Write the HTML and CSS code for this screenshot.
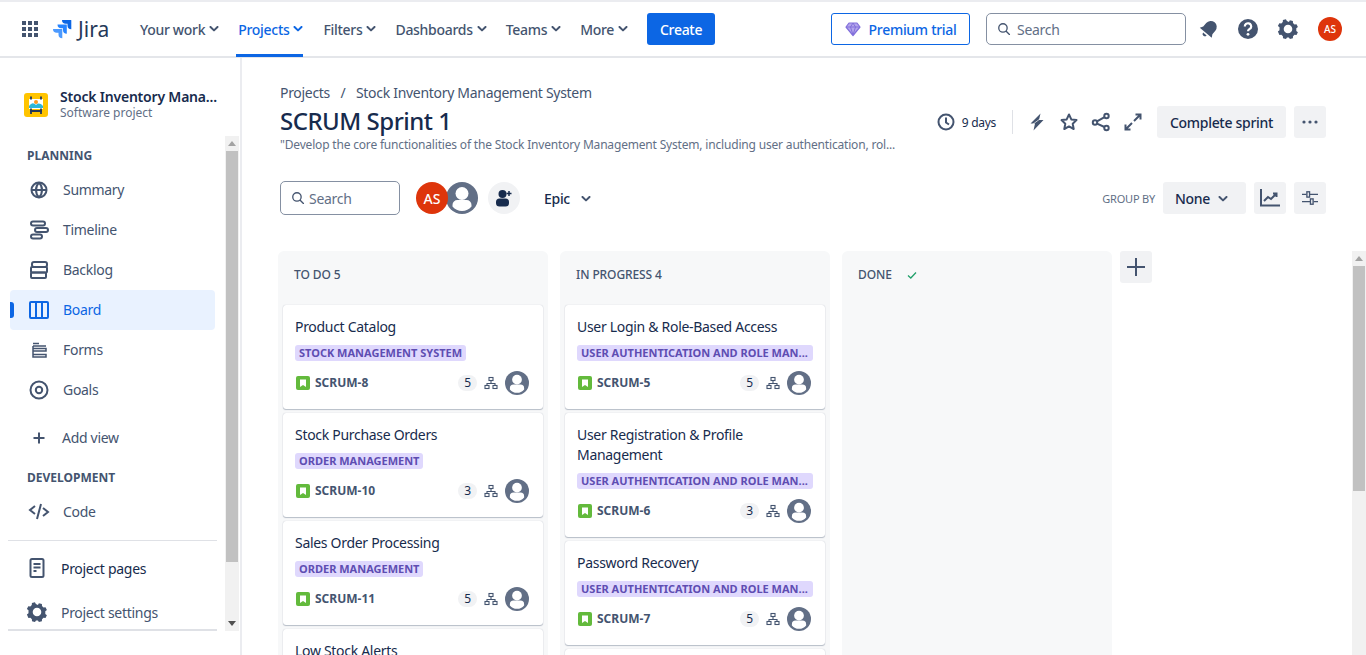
FILE: index.html
```html
<!DOCTYPE html>
<html lang="en">
<head>
    <meta charset="UTF-8">
    <meta name="viewport" content="width=device-width, initial-scale=1.0">
    <title>SCRUM Sprint 1 - Board</title>
    <link rel="stylesheet" href="styles.css">
</head>
<body>

    <svg class="sprite" width="0" height="0">
        <symbol id="chevron" viewBox="0 0 10 6"><path d="M1.500 1l3.500 3.400L8.500 1" fill="none" stroke="currentColor" stroke-width="2" stroke-linecap="round" stroke-linejoin="round"/></symbol>
        <symbol id="gear" viewBox="0 0 24 24"><path fill="currentColor" fill-rule="evenodd" d="M12 4.200l1-1.700 3 .9.100 2 1.500 1.400 2-.3 1.400 2.800-1.600 1.200v2.900l1.600 1.200-1.400 2.800-2-.3-1.500 1.400-.1 2-3 .9-1-1.700h-1.900l-1 1.700-3-.9-.1-2-1.500-1.400-2 .3L1 13.700l1.600-1.200V9.600L1 8.300l1.400-2.800 2 .3 1.500-1.400.1-2 3-.9 1 1.700zM11.100 7a4.300 4.300 0 100 8.600 4.300 4.300 0 000-8.600z" transform="translate(.9 .7)"/></symbol>
        <symbol id="search" viewBox="0 0 16 16"><circle cx="6.800" cy="6.800" r="4.800" fill="none" stroke="currentColor" stroke-width="1.500"/><path d="M10.500 10.500l3.700 3.700" stroke="currentColor" stroke-width="1.500" stroke-linecap="round"/></symbol>
        <symbol id="person" viewBox="0 0 32 32"><circle cx="16" cy="16" r="16" fill="#626f86"/><circle cx="16" cy="11.500" r="6.500" fill="#fff"/><path d="M6.500 23a5 5 0 015-5h9a5 5 0 015 5v1.500A12.800 12.800 0 0116 29a12.800 12.800 0 01-9.500-4.500z" fill="#fff"/></symbol>
        <symbol id="story" viewBox="0 0 16 16"><rect width="14" height="14" x="1" y="1" rx="2" fill="#63ba3c"/><path d="M5 4.500h6v7.500L8 10l-3 2z" fill="#fff"/></symbol>
        <symbol id="tree" viewBox="0 0 16 16"><g fill="none" stroke="#44546f" stroke-width="1.100"><rect x="6" y="2.500" width="4" height="3"/><rect x="2" y="10.500" width="4" height="3"/><rect x="10" y="10.500" width="4" height="3"/><path d="M8 5.500v3M4 10.500v-2h8v2"/></g></symbol>
    </svg>

    <header class="topbar">
        <svg class="apps" width="16" height="16" viewBox="0 0 16 16"><path fill="#44546f" d="M0 0h4v4H0zM6 0h4v4H6zM12 0h4v4h-4zM0 6h4v4H0zM6 6h4v4H6zM12 6h4v4h-4zM0 12h4v4H0zM6 12h4v4H6zM12 12h4v4h-4z"/></svg>
        <div class="logo">
            <svg width="20" height="20" viewBox="0 0 20 20">
                <path fill="#0c66e4" d="M19 1H10a3.800 3.800 0 003.800 3.800h1.700v1.600a3.800 3.800 0 003.800 3.800V1.300A.3.300 0 0019 1z"/>
                <path fill="#2684ff" d="M14.500 5.500h-9a3.800 3.800 0 003.800 3.800H11v1.600a3.800 3.800 0 003.800 3.800V5.800a.3.300 0 00-.3-.3z"/>
                <path fill="#4c9aff" d="M10 10H1a3.800 3.800 0 003.800 3.800h1.700v1.600a3.800 3.800 0 003.800 3.800v-9a.3.300 0 00-.3-.2z"/>
            </svg>
            <span>Jira</span>
        </div>
        <nav class="mainnav">
            <a href="#">Your work <svg class="chev"><use href="#chevron"/></svg></a>
            <a href="#" class="current">Projects <svg class="chev"><use href="#chevron"/></svg></a>
            <a href="#">Filters <svg class="chev"><use href="#chevron"/></svg></a>
            <a href="#">Dashboards <svg class="chev"><use href="#chevron"/></svg></a>
            <a href="#">Teams <svg class="chev"><use href="#chevron"/></svg></a>
            <a href="#">More <svg class="chev"><use href="#chevron"/></svg></a>
        </nav>
        <button class="create">Create</button>
        <button class="premium">
            <svg width="16" height="16" viewBox="0 0 16 16"><path d="M4 2h8l3 4-7 8.500L1 6z" fill="#b3a4ec" stroke="#8270db" stroke-width="1.200" stroke-linejoin="round"/><path d="M1 6h14M5.500 6L8 14 10.500 6 8 2 5.500 6" fill="none" stroke="#8270db"/></svg>
            Premium trial
        </button>
        <div class="searchbox top-search">
            <svg width="14" height="14"><use href="#search"/></svg>
            <span>Search</span>
        </div>
        <div class="top-icons">
            <svg width="22" height="22" viewBox="0 0 24 24"><g transform="rotate(40 12 12)"><path fill="#44546f" d="M12 2.500a6.500 6.500 0 00-6.500 6.500v5L3.500 17.500h17L18.500 14V9A6.500 6.500 0 0012 2.500z"/><path fill="#44546f" d="M9.500 19h5a2.500 2.500 0 01-5 0z"/></g></svg>
            <svg width="24" height="24" viewBox="0 0 24 24"><circle cx="12" cy="12" r="10" fill="#44546f"/><path d="M8.800 9.500a3.200 3.200 0 116 1.500c-.7 1-2.800 1.500-2.800 3.200" fill="none" stroke="#fff" stroke-width="2.200"/><circle cx="12" cy="17.300" r="1.400" fill="#fff"/></svg>
            <svg width="24" height="24" class="gear"><use href="#gear"/></svg>
            <span class="avatar small">AS</span>
        </div>
    </header>

    <div class="layout">
        <aside class="sidebar">
            <div class="project">
                <svg width="24" height="24" viewBox="0 0 24 24"><rect width="24" height="24" rx="3" fill="#ffc400"/><rect x="5" y="6" width="14" height="10" fill="#fff"/><path d="M5 13c3-4 5-3 7-1 2-2 4-2 7 1v2H5z" fill="#2eb6d8"/><circle cx="12" cy="9" r="2" fill="#ff991f"/><path d="M7 3.500v3M17 3.500v3M7 15.500V21M17 15.500V21M6 18h12" stroke="#253858" stroke-width="1.800" fill="none"/></svg>
                <div class="project-text">
                    <strong>Stock Inventory Mana...</strong>
                    <small>Software project</small>
                </div>
            </div>
            <div class="side-scroll">
                <div class="side-list">
                    <h4>PLANNING</h4>
                    <a href="#" class="item">
                        <svg width="24" height="24" viewBox="0 0 24 24" class="stroke"><circle cx="12" cy="12" r="7.500"/><path d="M4.500 12h15M12 4.500c-4 4-4 11 0 15M12 4.500c4 4 4 11 0 15"/></svg>
                        Summary</a>
                    <a href="#" class="item">
                        <svg width="24" height="24" viewBox="0 0 24 24" class="stroke"><rect x="4" y="3.500" width="14" height="4" rx="2"/><rect x="8" y="10" width="13" height="4" rx="2"/><rect x="4" y="16.500" width="11" height="4" rx="2"/></svg>
                        Timeline</a>
                    <a href="#" class="item">
                        <svg width="24" height="24" viewBox="0 0 24 24" class="stroke"><rect x="5" y="4" width="15" height="5" rx="2"/><rect x="4" y="9" width="16" height="5.500" rx="1"/><rect x="4" y="14.500" width="15" height="5.500" rx="1"/></svg>
                        Backlog</a>
                    <a href="#" class="item active">
                        <svg width="24" height="24" viewBox="0 0 24 24" class="stroke"><rect x="3" y="4" width="18" height="16" rx="1"/><path d="M9 4v16M15 4v16"/></svg>
                        Board</a>
                    <a href="#" class="item">
                        <svg width="24" height="24" viewBox="0 0 24 24" class="stroke thin"><path d="M6 5.500h6M6 10.500h13v2.500H6zM6 16.500h13V19H6zM6 8h13M6 8v2.500M6 13v3.500"/></svg>
                        Forms</a>
                    <a href="#" class="item">
                        <svg width="24" height="24" viewBox="0 0 24 24" class="stroke"><circle cx="12" cy="12" r="8.500"/><circle cx="12" cy="12" r="3.200"/></svg>
                        Goals</a>
                    <a href="#" class="item addview">
                        <svg width="24" height="24" viewBox="0 0 24 24" class="stroke"><path d="M12 6.500v11M6.500 12h11"/></svg>
                        Add view</a>
                    <h4 class="dev">DEVELOPMENT</h4>
                    <a href="#" class="item code">
                        <svg width="24" height="24" viewBox="0 0 24 24" class="stroke"><path d="M8 7l-5 4 5 4M16 9l5 4-5 4M14 5l-4 15"/></svg>
                        Code</a>
                    <div class="side-sep"></div>
                    <a href="#" class="item dark pages">
                        <svg width="24" height="24" viewBox="0 0 24 24" class="stroke"><rect x="5.500" y="3" width="13" height="18" rx="1.500"/><path d="M8.500 8h7M8.500 11.500h7M8.500 15h3"/></svg>
                        Project pages</a>
                    <a href="#" class="item settings">
                        <svg width="24" height="24" class="gear"><use href="#gear"/></svg>
                        Project settings</a>
                </div>
                <div class="fake-scroll side-bar">
                    <i class="arrow up"></i>
                    <div class="thumb"></div>
                    <i class="arrow down"></i>
                </div>
            </div>
        </aside>

        <main class="content">
            <div class="crumbs"><a href="#">Projects</a><span>/</span><a href="#">Stock Inventory Management System</a></div>
            <div class="sprint-head">
                <div class="sprint-title">
                    <h1>SCRUM Sprint 1</h1>
                    <p>"Develop the core functionalities of the Stock Inventory Management System, including user authentication, rol...</p>
                </div>
                <div class="sprint-actions">
                    <svg width="20" height="20" viewBox="0 0 20 20" class="stroke"><circle cx="10" cy="10" r="7.500"/><path d="M10 5.500V10.500l3 2"/></svg>
                    <span class="days">9 days</span>
                    <span class="vline"></span>
                    <svg width="20" height="20" viewBox="0 0 20 20"><path fill="#44546f" d="M13.500 1.500L3.500 11.500H8L6.500 18.500 16.500 8H12z"/><path d="M3.500 14l12-9" stroke="#fff" stroke-width=".7"/></svg>
                    <svg width="20" height="20" viewBox="0 0 20 20" class="stroke"><path d="M10 2.500l2.300 4.900 5.200.7-3.800 3.600 1 5.300-4.700-2.600L5.300 17l1-5.300L2.500 8.100l5.200-.7z" stroke-linejoin="round"/></svg>
                    <svg width="20" height="20" viewBox="0 0 20 20" class="stroke"><circle cx="15.500" cy="4" r="2.200"/><circle cx="4" cy="10.500" r="2.200"/><circle cx="15.500" cy="16" r="2.200"/><path d="M6 9.400l7.500-4.200M6 11.600l7.500 3.400"/></svg>
                    <svg width="20" height="20" viewBox="0 0 20 20" class="stroke"><path d="M11 9l6-6M12.500 2.500h5v5M9 11l-6 6M2.500 12.500v5h5"/></svg>
                    <button class="grey complete">Complete sprint</button>
                    <button class="grey square"><svg width="16" height="4" viewBox="0 0 16 4"><circle cx="2" cy="2" r="1.600" fill="#44546f"/><circle cx="8" cy="2" r="1.600" fill="#44546f"/><circle cx="14" cy="2" r="1.600" fill="#44546f"/></svg></button>
                </div>
            </div>

            <div class="filters">
                <div class="searchbox board-search">
                    <svg width="14" height="14"><use href="#search"/></svg>
                    <span>Search</span>
                </div>
                <div class="people">
                    <span class="avatar big">AS</span>
                    <svg width="32" height="32" class="ringed"><use href="#person"/></svg>
                </div>
                <button class="addpeople"><svg width="18" height="18" viewBox="0 0 18 18"><circle cx="7.500" cy="5" r="4" fill="#172b4d"/><rect x="1" y="9.500" width="13" height="8" rx="3.500" fill="#172b4d"/><path d="M14 2v5M11.500 4.500h5" stroke="#172b4d" stroke-width="1.500"/></svg></button>
                <button class="epic">Epic <svg class="chev"><use href="#chevron"/></svg></button>
                <div class="filters-right">
                    <span class="groupby">GROUP BY</span>
                    <button class="grey none">None <svg class="chev"><use href="#chevron"/></svg></button>
                    <button class="grey square"><svg width="20" height="20" viewBox="0 0 20 20" class="stroke"><path d="M1 1v16.500h19M4 13l4-4 3 2 5-5M13 5.500h3.500V9"/></svg></button>
                    <button class="grey square"><svg width="16" height="16" viewBox="0 0 18 18" class="stroke thin"><path d="M0 5h5M9 5h9M0 13h9M13 13h5"/><rect x="5.500" y="2" width="3" height="6"/><rect x="9.500" y="10" width="3" height="6"/></svg></button>
                </div>
            </div>

            <div class="board-wrap">
                <div class="board">
                    <section class="column">
                        <h3>TO DO 5</h3>
                        <article class="card">
                            <div class="card-title">Product Catalog</div>
                            <span class="tag">STOCK MANAGEMENT SYSTEM</span>
                            <div class="card-foot">
                                <svg width="16" height="16"><use href="#story"/></svg><b>SCRUM-8</b>
                                <span class="points">5</span>
                                <svg width="16" height="16" class="tree"><use href="#tree"/></svg>
                                <svg width="24" height="24"><use href="#person"/></svg>
                            </div>
                        </article>
                        <article class="card">
                            <div class="card-title">Stock Purchase Orders</div>
                            <span class="tag">ORDER MANAGEMENT</span>
                            <div class="card-foot">
                                <svg width="16" height="16"><use href="#story"/></svg><b>SCRUM-10</b>
                                <span class="points">3</span>
                                <svg width="16" height="16" class="tree"><use href="#tree"/></svg>
                                <svg width="24" height="24"><use href="#person"/></svg>
                            </div>
                        </article>
                        <article class="card">
                            <div class="card-title">Sales Order Processing</div>
                            <span class="tag">ORDER MANAGEMENT</span>
                            <div class="card-foot">
                                <svg width="16" height="16"><use href="#story"/></svg><b>SCRUM-11</b>
                                <span class="points">5</span>
                                <svg width="16" height="16" class="tree"><use href="#tree"/></svg>
                                <svg width="24" height="24"><use href="#person"/></svg>
                            </div>
                        </article>
                        <article class="card">
                            <div class="card-title">Low Stock Alerts</div>
                        </article>
                    </section>
                    <section class="column">
                        <h3>IN PROGRESS 4</h3>
                        <article class="card">
                            <div class="card-title">User Login &amp; Role-Based Access</div>
                            <span class="tag wide">USER AUTHENTICATION AND ROLE MAN...</span>
                            <div class="card-foot">
                                <svg width="16" height="16"><use href="#story"/></svg><b>SCRUM-5</b>
                                <span class="points">5</span>
                                <svg width="16" height="16" class="tree"><use href="#tree"/></svg>
                                <svg width="24" height="24"><use href="#person"/></svg>
                            </div>
                        </article>
                        <article class="card">
                            <div class="card-title">User Registration &amp; Profile Management</div>
                            <span class="tag wide">USER AUTHENTICATION AND ROLE MAN...</span>
                            <div class="card-foot">
                                <svg width="16" height="16"><use href="#story"/></svg><b>SCRUM-6</b>
                                <span class="points">3</span>
                                <svg width="16" height="16" class="tree"><use href="#tree"/></svg>
                                <svg width="24" height="24"><use href="#person"/></svg>
                            </div>
                        </article>
                        <article class="card">
                            <div class="card-title">Password Recovery</div>
                            <span class="tag wide">USER AUTHENTICATION AND ROLE MAN...</span>
                            <div class="card-foot">
                                <svg width="16" height="16"><use href="#story"/></svg><b>SCRUM-7</b>
                                <span class="points">5</span>
                                <svg width="16" height="16" class="tree"><use href="#tree"/></svg>
                                <svg width="24" height="24"><use href="#person"/></svg>
                            </div>
                        </article>
                        <article class="card"></article>
                    </section>
                    <section class="column">
                        <h3>DONE <svg width="12" height="12" viewBox="0 0 12 12" class="tick"><path d="M2 6.500l2.800 2.500L10 3.500" fill="none" stroke="#22a06b" stroke-width="1.300"/></svg></h3>
                    </section>
                    <button class="grey square addcol"><svg width="20" height="20" viewBox="0 0 20 20" class="stroke"><path d="M10 1v18M1 10h18"/></svg></button>
                </div>
                <div class="fake-scroll board-bar">
                    <i class="arrow up"></i>
                    <div class="thumb"></div>
                </div>
            </div>
        </main>
    </div>

</body>
</html>
```

FILE: styles.css
```css
* {
    box-sizing: border-box;
}

html, body {
    height: 100%;
}

body {
    font-family: "Noto Sans", Arial, sans-serif;
    font-size: 14px;
    letter-spacing: -0.3px;
    color: #172b4d;
    background-color: white;
    margin: 0;
    overflow: hidden;
    display: flex;
    flex-direction: column;
}

a {
    color: inherit;
    text-decoration: none;
}

button {
    font-family: inherit;
    letter-spacing: inherit;
    border: none;
    cursor: pointer;
}

.sprite {
    position: absolute;
}

.stroke {
    fill: none;
    stroke: #44546f;
    stroke-width: 2;
}

.stroke.thin {
    stroke-width: 1.5;
}

.gear {
    color: #44546f;
}

.chev {
    width: 10px;
    height: 6px;
    vertical-align: 2px;
}

/* top bar */
.topbar {
    height: 58px;
    flex: none;
    display: flex;
    align-items: center;
    padding-left: 22px;
    border-top: 2px solid #ebecf0;
    border-bottom: 2px solid #e4e6ea;
}

.logo {
    display: flex;
    align-items: center;
    gap: 6px;
    margin-left: 14px;
    width: 88px;
    font-size: 21px;
    letter-spacing: 0;
    color: #253858;
}

.mainnav {
    display: flex;
    align-self: stretch;
}

.mainnav a {
    display: flex;
    align-items: center;
    gap: 4px;
    height: 54px;
    margin-right: 19px;
    color: #44546f;
    font-weight: 500;
    white-space: nowrap;
}

.mainnav a.current {
    color: #0c66e4;
    box-shadow: inset 0 -2px 0 #0c66e4, 0 1px 0 #0c66e4;
    margin-left: -2px;
    margin-right: 20px;
    padding-left: 2px;
}

.create {
    background-color: #0c66e4;
    color: white;
    font-size: 14px;
    font-weight: 500;
    width: 68px;
    height: 32px;
    border-radius: 3px;
}

.premium {
    display: flex;
    align-items: center;
    justify-content: center;
    gap: 8px;
    width: 139px;
    height: 32px;
    margin-left: 116px;
    background: white;
    border: 1px solid #0c66e4;
    border-radius: 3px;
    color: #0c66e4;
    font-size: 14px;
    font-weight: 500;
}

.searchbox {
    display: flex;
    align-items: center;
    gap: 4px;
    border: 1px solid #8590a2;
    border-radius: 5px;
    padding-left: 10px;
    color: #626f86;
}

.searchbox svg {
    color: #44546f;
}

.top-search {
    width: 200px;
    height: 32px;
    margin-left: 16px;
    gap: 6px;
}

.top-icons {
    display: flex;
    align-items: center;
    gap: 16px;
    margin-left: 12px;
}

.avatar {
    display: inline-flex;
    align-items: center;
    justify-content: center;
    border-radius: 50%;
    background-color: #de350b;
    color: white;
    font-weight: 500;
    letter-spacing: 0;
}

.avatar.small {
    width: 24px;
    height: 24px;
    font-size: 10px;
    margin-left: 2px;
}

.avatar.big {
    width: 32px;
    height: 32px;
    font-size: 14px;
    position: relative;
    z-index: 1;
}

/* sidebar */
.layout {
    flex: 1;
    display: flex;
    min-height: 0;
}

.sidebar {
    width: 242px;
    flex: none;
    border-right: 2px solid #ebecf0;
    padding-top: 18px;
}

.project {
    display: flex;
    align-items: center;
    gap: 12px;
    height: 58px;
    margin-bottom: 2px;
    padding-left: 24px;
}

.project-text {
    display: flex;
    flex-direction: column;
    padding-bottom: 2px;
}

.project-text strong {
    font-size: 14px;
    font-weight: 600;
    letter-spacing: -0.2px;
    line-height: 16px;
    white-space: nowrap;
}

.project-text small {
    font-size: 12px;
    line-height: 15px;
    letter-spacing: 0;
    color: #626f86;
}

.side-scroll {
    display: flex;
    height: 495px;
}

.side-list {
    width: 209px;
    margin-left: 8px;
    height: 495px;
    border-bottom: 2px solid #dfe1e6;
}

.side-list h4 {
    margin: 0;
    height: 34px;
    padding: 12px 0 0 19px;
    font-size: 12px;
    line-height: 16px;
    font-weight: 700;
    letter-spacing: 0;
    color: #44546f;
}

.item {
    display: flex;
    align-items: center;
    gap: 12px;
    height: 40px;
    margin-left: 2px;
    width: 205px;
    padding-left: 17px;
    padding-bottom: 1px;
    color: #44546f;
    border-radius: 4px;
    position: relative;
}

.item.active {
    background-color: #e9f2ff;
    color: #0c66e4;
}

.item.active svg {
    stroke: #0c66e4;
}

.item.active::before {
    content: "";
    position: absolute;
    left: 0;
    top: 12px;
    width: 4px;
    height: 16px;
    border-radius: 0 3px 3px 0;
    background-color: #0c66e4;
}

.addview {
    margin-top: 8px;
    gap: 11px;
}

.side-list h4.dev {
    height: 31px;
    padding-top: 2px;
    margin-top: 8px;
    line-height: 20px;
}

.code {
    height: 36px;
    margin-top: -4px;
    padding-bottom: 0;
}

.side-sep {
    height: 1px;
    background-color: #dfe1e6;
    margin-top: 11px;
}

.pages {
    height: 44px;
    margin-top: 5px;
    padding-left: 15px;
    padding-bottom: 0;
    color: #172b4d;
}

.settings {
    height: 44px;
    padding-left: 15px;
    padding-bottom: 0;
}

.fake-scroll {
    background-color: #f1f1f1;
    display: flex;
    flex-direction: column;
    align-items: center;
    width: 14px;
}

.thumb {
    background-color: #c1c1c1;
    width: 12px;
}

.arrow {
    display: block;
    width: 0;
    height: 0;
    margin: 5px 0;
    border-left: 4px solid transparent;
    border-right: 4px solid transparent;
}

.arrow.up {
    border-bottom: 5px solid #a3a3a3;
}

.arrow.down {
    border-top: 5px solid #505050;
    margin-top: auto;
}

.side-bar {
    margin-left: 8px;
}

.side-bar .thumb {
    height: 411px;
}

/* sprint header */
.content {
    flex: 1;
    min-width: 0;
    padding: 24px 0 0 38px;
    display: flex;
    flex-direction: column;
}

.crumbs {
    display: flex;
    gap: 10.5px;
    height: 22px;
    line-height: 22px;
    color: #44546f;
}

.sprint-head {
    display: flex;
    justify-content: space-between;
    padding-right: 40px;
}

.sprint-title h1 {
    margin: 1px 0 0;
    font-size: 24px;
    line-height: 32px;
    font-weight: 500;
    letter-spacing: -0.5px;
}

.sprint-title p {
    margin: 0;
    font-size: 12px;
    line-height: 16px;
    letter-spacing: -0.18px;
    color: #626f86;
    width: 620px;
    white-space: nowrap;
}

.sprint-actions {
    display: flex;
    align-items: center;
    gap: 12px;
    height: 32px;
    margin-top: 2px;
}

.days {
    font-size: 12px;
    color: #172b4d;
    margin-left: -6px;
}

.vline {
    width: 1px;
    height: 24px;
    background-color: #dfe1e6;
    margin: 0 2px 0 4px;
}

.grey {
    background-color: #f1f2f4;
    color: #172b4d;
    height: 32px;
    border-radius: 3px;
    font-size: 14px;
    font-weight: 500;
}

.complete {
    width: 129px;
    margin-left: 2px;
}

.sprint-actions .square {
    margin-left: -4px;
}

.square {
    width: 32px;
    display: flex;
    align-items: center;
    justify-content: center;
    padding: 0;
}

/* filters */
.filters {
    display: flex;
    align-items: center;
    height: 36px;
    margin-top: 27px;
    padding-right: 40px;
}

.board-search {
    width: 120px;
    height: 34px;
}

.people {
    display: flex;
    align-items: center;
    margin-left: 16px;
}

.ringed {
    margin-left: -2px;
}

.addpeople {
    width: 32px;
    height: 32px;
    margin-left: 10px;
    border-radius: 50%;
    background-color: #f1f2f4;
    display: flex;
    align-items: center;
    justify-content: center;
    padding: 0;
}

.epic {
    background: none;
    color: #172b4d;
    font-size: 14px;
    font-weight: 500;
    margin-left: 16px;
    padding: 0 8px;
}

.epic .chev {
    margin-left: 8px;
    color: #44546f;
}

.filters-right {
    margin-left: auto;
    display: flex;
    align-items: center;
    gap: 8px;
}

.groupby {
    font-size: 11px;
    letter-spacing: -0.2px;
    color: #626f86;
}

.none {
    width: 83px;
    padding: 0 0 0 12px;
    text-align: left;
}

.none .chev {
    margin-left: 5px;
    color: #44546f;
}

/* board */
.board-wrap {
    flex: 1;
    min-height: 0;
    display: flex;
    margin-top: 35px;
    margin-left: -2px;
}

.board {
    flex: 1;
    display: flex;
    align-items: flex-start;
    gap: 12px;
    overflow: hidden;
}

.column {
    width: 270px;
    flex: none;
    height: 420px;
    background-color: #f7f8f9;
    border-radius: 6px 6px 0 0;
    padding: 0 5px;
}

.column h3 {
    margin: 0;
    height: 54px;
    padding: 16px 0 0 11px;
    font-size: 12px;
    line-height: 16px;
    font-weight: 500;
    letter-spacing: -0.1px;
    color: #44546f;
}

.tick {
    margin-left: 11px;
    vertical-align: -2px;
}

.card {
    background-color: white;
    border-radius: 3px;
    box-shadow: 0 1px 1px #091e4240, 0 0 1px #091e4240;
    padding: 12px 12px 0;
    height: 104px;
    margin-bottom: 4px;
}

.card-title {
    line-height: 20px;
}

.tag {
    display: inline-block;
    margin-top: 8px;
    padding: 0 4px;
    height: 16px;
    line-height: 16px;
    border-radius: 3px;
    background-color: #dfd8fd;
    color: #5e4db2;
    font-size: 11px;
    font-weight: 700;
    letter-spacing: 0;
    white-space: nowrap;
    vertical-align: top;
}

.tag.wide {
    width: 236px;
}

.card-foot {
    display: flex;
    align-items: center;
    margin-top: 10px;
    height: 24px;
    padding-right: 2px;
    color: #44546f;
}

.card-foot b {
    font-size: 12px;
    font-weight: 700;
    letter-spacing: 0;
    margin-left: 4px;
    padding-bottom: 1px;
}

.points {
    margin-left: auto;
    width: 19px;
    height: 16px;
    line-height: 16px;
    text-align: center;
    border-radius: 8px;
    background-color: #f1f2f4;
    font-size: 12px;
    color: #172b4d;
}

.tree {
    margin: 0 6px;
}

.column:nth-child(2) .card:nth-of-type(2) {
    height: 124px;
}

.addcol {
    margin-left: -4px;
}

.board-bar .thumb {
    height: 225px;
}
```
